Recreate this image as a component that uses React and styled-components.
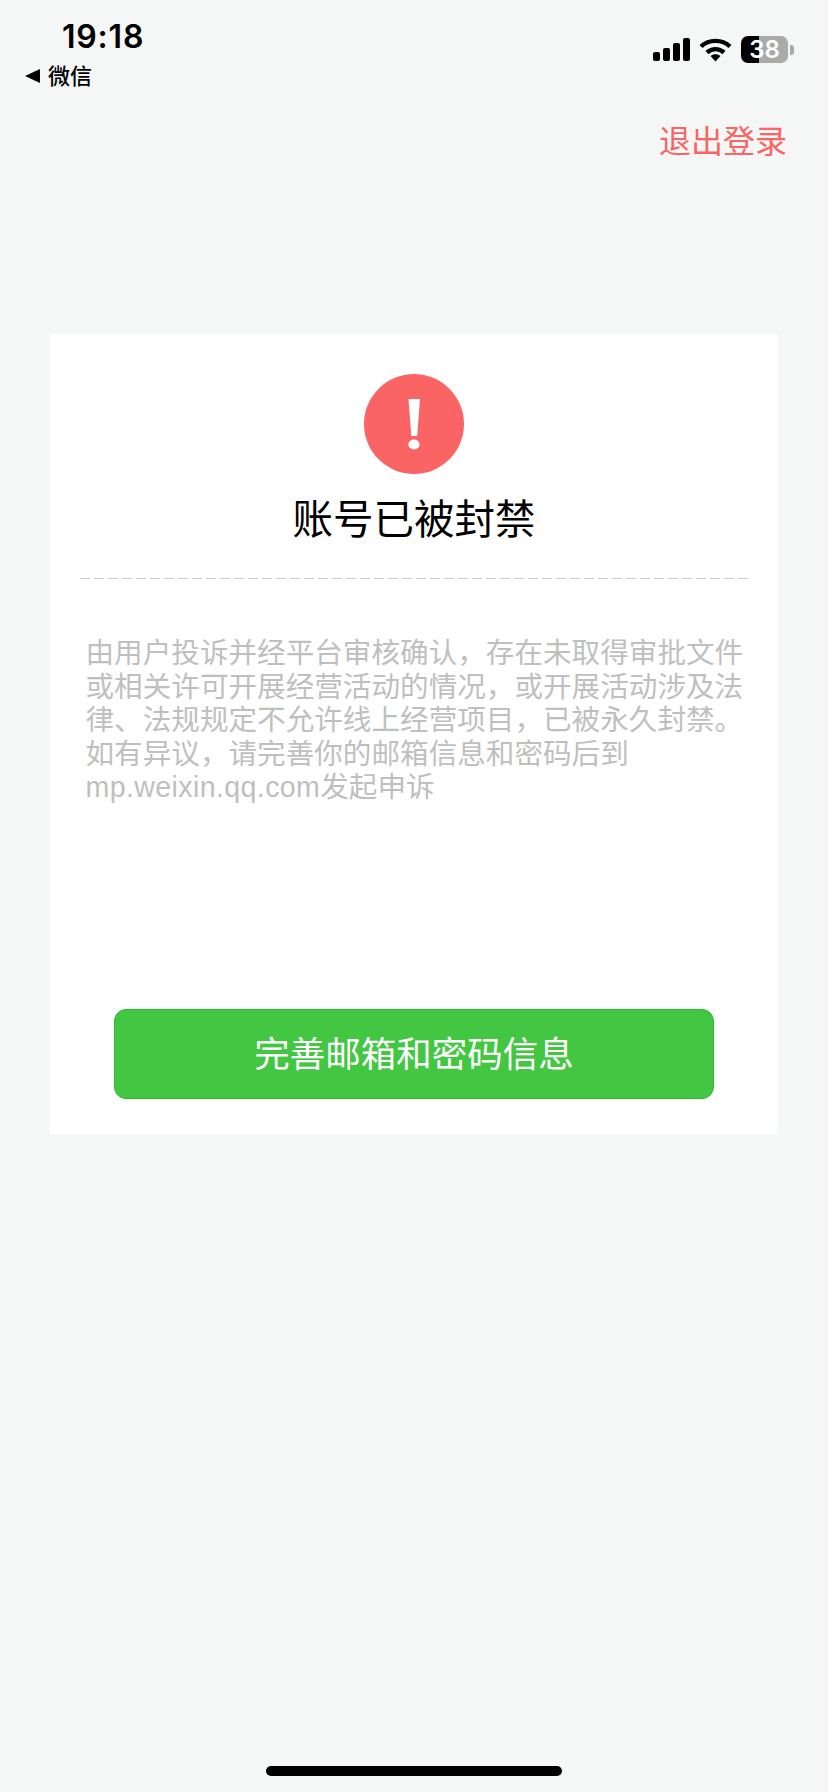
import React from "react";
import styled, { createGlobalStyle } from "styled-components";

const Global = createGlobalStyle`
  html, body { margin: 0; padding: 0; background: #f5f7f6; }
  body { font-family: "Noto Sans CJK SC", "Liberation Sans", sans-serif; }
  * { box-sizing: border-box; }
`;

const Page = styled.div`
  width: 828px;
  height: 1792px;
  display: flex;
  flex-direction: column;
  background: #f5f7f6;
  overflow: hidden;
`;

const StatusBar = styled.header`
  height: 96px;
  padding: 14px 34px 0 25px;
  display: flex;
  justify-content: space-between;
  align-items: flex-start;
`;

const StatusLeft = styled.div`
  display: flex;
  flex-direction: column;
  align-items: flex-start;
`;

const Clock = styled.div`
  margin: 1px 0 -1px 37px;
  font-family: "Inter", "Liberation Sans", sans-serif;
  font-size: 32px;
  line-height: 44px;
  font-weight: 600;
  letter-spacing: 0.8px;
  color: #000;
`;

const BackLink = styled.div`
  display: flex;
  align-items: center;
  gap: 8px;
  font-size: 22px;
  line-height: 32px;
  font-weight: 500;
  color: #000;
`;

const BackArrow = styled.span`
  width: 0;
  height: 0;
  margin-top: 3px;
  border-style: solid;
  border-width: 7px 15px 7px 0;
  border-color: transparent #000 transparent transparent;
`;

const StatusIcons = styled.div`
  margin-top: 22px;
  display: flex;
  align-items: center;
  gap: 9px;
`;

const BatteryWrap = styled.div`
  display: flex;
  align-items: center;
  gap: 2px;
`;

const Battery = styled.div`
  width: 47px;
  height: 27px;
  border-radius: 7px;
  overflow: hidden;
  background: linear-gradient(to right, #000 0, #000 18px, #aaaaaa 18px, #aaaaaa 100%);
  display: flex;
  align-items: center;
  justify-content: center;
  font-family: "Inter", "Liberation Sans", sans-serif;
  font-size: 24px;
  font-weight: 600;
  color: #fff;
`;

const BatteryCap = styled.span`
  width: 4px;
  height: 10px;
  border-radius: 0 3px 3px 0;
  background: #aaaaaa;
`;

const LogoutRow = styled.div`
  display: flex;
  justify-content: flex-end;
  padding: 20px 41px 0 0;
  height: 238px;
`;

const Logout = styled.a`
  font-size: 32px;
  line-height: 46px;
  color: #fa6464;
`;

const Card = styled.section`
  margin: 0 50px;
  height: 800px;
  background: #fff;
  padding-top: 40px;
  display: flex;
  flex-direction: column;
  align-items: center;
`;

const AlertIcon = styled.svg`
  display: block;
  width: 100px;
  height: 100px;
`;

const Title = styled.h1`
  margin: 14px 0 0;
  font-size: 40.5px;
  line-height: 58px;
  font-weight: 400;
  color: #000;
`;

const Divider = styled.hr`
  width: 668px;
  height: 1px;
  margin: 32px 0 0;
  border: 0;
  background: repeating-linear-gradient(to right, #cccccc 0, #cccccc 10px, transparent 10px, transparent 14px);
`;

const Message = styled.p`
  width: 660px;
  margin: 58px 0 0 3px;
  font-size: 28.6px;
  line-height: 33.5px;
  color: #bfbfbf;
  font-family: "Liberation Sans", "Noto Sans CJK SC", sans-serif;
`;

const Url = styled.span`
  letter-spacing: 0.37px;
`;

const ActionButton = styled.button`
  width: 600px;
  height: 90px;
  margin-top: auto;
  margin-bottom: 35px;
  border: 1px solid #2dbb2d;
  border-radius: 12px;
  background: #43c743;
  color: #fff;
  font-family: inherit;
  font-size: 35.5px;
  padding: 0 0 5px;
`;

const HomeBar = styled.div`
  width: 296px;
  height: 10px;
  margin: auto auto 16px;
  border-radius: 5px;
  background: #000;
`;

export default function App() {
  return (
    <Page>
      <Global />
      <StatusBar>
        <StatusLeft>
          <Clock>19:18</Clock>
          <BackLink><BackArrow />微信</BackLink>
        </StatusLeft>
        <StatusIcons>
          <svg width="37" height="23" viewBox="0 0 37 23" fill="#000">
            <rect x="0" y="14" width="7" height="9" rx="2" />
            <rect x="10" y="10" width="7" height="13" rx="2" />
            <rect x="20" y="5" width="7" height="18" rx="2" />
            <rect x="30" y="0" width="7" height="23" rx="2" />
          </svg>
          <svg width="33" height="24" viewBox="0 0 33 24" fill="none" stroke="#000" strokeWidth="4.4">
            <path d="M2 8.5C10 1 23 1 31 8.5" />
            <path d="M8 14.5C13 10 20 10 25 14.5" />
            <path d="M11.5 18L16.5 23.5L21.5 18C18.5 15.5 14.5 15.5 11.5 18Z" fill="#000" stroke="none" />
          </svg>
          <BatteryWrap>
            <Battery>38</Battery>
            <BatteryCap />
          </BatteryWrap>
        </StatusIcons>
      </StatusBar>
      <LogoutRow><Logout>退出登录</Logout></LogoutRow>
      <Card>
        <AlertIcon viewBox="0 0 100 100">
          <circle cx="50" cy="50" r="50" fill="#fa6464" />
          <path d="M44.5 25H56L53.2 62H47.3Z" fill="#fff" />
          <ellipse cx="50" cy="70.5" rx="5.6" ry="5" fill="#fff" />
        </AlertIcon>
        <Title>账号已被封禁</Title>
        <Divider />
        <Message>
          由用户投诉并经平台审核确认，存在未取得审批文件或相关许可开展经营活动的情况，或开展活动涉及法律、法规规定不允许线上经营项目，已被永久封禁。如有异议，请完善你的邮箱信息和密码后到<Url>mp.weixin.qq.com</Url>发起申诉
        </Message>
        <ActionButton>完善邮箱和密码信息</ActionButton>
      </Card>
      <HomeBar />
    </Page>
  );
}
